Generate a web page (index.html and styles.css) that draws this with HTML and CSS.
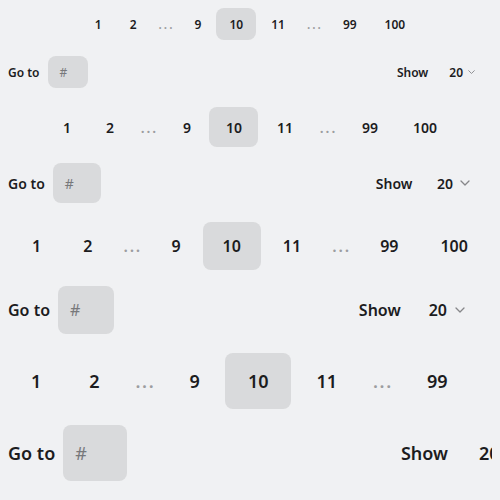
FILE: index.html
```html
<!DOCTYPE html>
<html lang="en">
<head>
<meta charset="utf-8">
<title>Pagination sizes</title>
<link rel="stylesheet" href="styles.css">
</head>
<body>
<main class="stack">
  <section class="pager size-s">
    <nav class="pages">
      <span class="item">1</span><span class="item">2</span><span class="dots">...</span><span class="item">9</span><span class="item active">10</span><span class="item">11</span><span class="dots">...</span><span class="item">99</span><span class="item">100</span>
    </nav>
    <div class="footer">
      <div class="goto"><span class="label">Go to</span><span class="field">#</span></div>
      <div class="show"><span class="label">Show</span><span class="select">20<svg class="chev" viewBox="0 0 10 6"><path d="M1 1l4 4 4-4"/></svg></span></div>
    </div>
  </section>
  <section class="pager size-m">
    <nav class="pages">
      <span class="item">1</span><span class="item">2</span><span class="dots">...</span><span class="item">9</span><span class="item active">10</span><span class="item">11</span><span class="dots">...</span><span class="item">99</span><span class="item">100</span>
    </nav>
    <div class="footer">
      <div class="goto"><span class="label">Go to</span><span class="field">#</span></div>
      <div class="show"><span class="label">Show</span><span class="select">20<svg class="chev" viewBox="0 0 10 6"><path d="M1 1l4 4 4-4"/></svg></span></div>
    </div>
  </section>
  <section class="pager size-l">
    <nav class="pages">
      <span class="item">1</span><span class="item">2</span><span class="dots">...</span><span class="item">9</span><span class="item active">10</span><span class="item">11</span><span class="dots">...</span><span class="item">99</span><span class="item">100</span>
    </nav>
    <div class="footer">
      <div class="goto"><span class="label">Go to</span><span class="field">#</span></div>
      <div class="show"><span class="label">Show</span><span class="select">20<svg class="chev" viewBox="0 0 10 6"><path d="M1 1l4 4 4-4"/></svg></span></div>
    </div>
  </section>
  <section class="pager size-xl">
    <nav class="pages">
      <span class="item">1</span><span class="item">2</span><span class="dots">...</span><span class="item">9</span><span class="item active">10</span><span class="item">11</span><span class="dots">...</span><span class="item">99</span><span class="item">100</span>
    </nav>
    <div class="footer">
      <div class="goto"><span class="label">Go to</span><span class="field">#</span></div>
      <div class="show"><span class="label">Show</span><span class="select">20<svg class="chev" viewBox="0 0 10 6"><path d="M1 1l4 4 4-4"/></svg></span></div>
    </div>
  </section>
</main>
</body>
</html>
```

FILE: styles.css
```css
html, body {
  background: #f0f1f3;
}
body {
  margin: 8px;
  overflow: hidden;
  font-family: "Noto Sans", "Open Sans", sans-serif;
  font-weight: 600;
  color: #1c1c1e;
}
.stack {
  display: flex;
  flex-direction: column;
  align-items: flex-start;
  gap: 19px;
}
.pager {
  display: flex;
  flex-direction: column;
  gap: 16px;
  width: max-content;
  min-width: 100%;
  font-size: var(--fs);
}
.size-s  { --h: 32px; --p: 13px; --fs: 12px; --e: 28px; --pr: 17px; --cw: 7px;  --cg: 5px; --ls: 2px; }
.size-m  { --h: 40px; --p: 16.5px; --fs: 14px; --e: 32px; --pr: 22px; --cw: 10px; --cg: 7px; --ls: 2px; }
.size-l  { --h: 48px; --p: 20px; --fs: 16px; --e: 35px; --pr: 27px; --cw: 10px; --cg: 8px; --ls: 1.8px; }
.size-xl { --h: 56px; --p: 23px; --fs: 18px; --e: 40px; --pr: 30px; --cw: 11px; --cg: 9px; --ls: 1.6px; }

.pages {
  display: flex;
  justify-content: center;
  gap: 2px;
}
.item {
  height: var(--h);
  min-width: var(--h);
  box-sizing: border-box;
  padding: 0 var(--p);
  display: flex;
  align-items: center;
  justify-content: center;
  border-radius: 8px;
}
.item.active {
  background: #d9dadc;
}
.dots {
  width: var(--e);
  height: var(--h);
  box-sizing: border-box;
  padding-left: var(--ls);
  display: flex;
  align-items: center;
  justify-content: center;
  color: #9c9da0;
  letter-spacing: var(--ls);
}
.footer {
  display: flex;
  justify-content: space-between;
  align-items: center;
}
.goto, .show {
  display: flex;
  align-items: center;
  gap: 8px;
}
.field {
  width: calc(var(--h) + 8px);
  height: var(--h);
  box-sizing: border-box;
  padding: 0 12px;
  display: flex;
  align-items: center;
  background: #d9dadc;
  border-radius: 8px;
  color: #77787b;
  font-weight: 400;
}
.select {
  height: var(--h);
  display: flex;
  align-items: center;
  gap: var(--cg);
  padding: 0 var(--pr) 0 var(--p);
}
.chev {
  width: var(--cw);
  height: calc(var(--cw) * 0.6);
  fill: none;
  stroke: #86878a;
  stroke-width: 1.3;
  stroke-linecap: round;
  stroke-linejoin: round;
}
```
